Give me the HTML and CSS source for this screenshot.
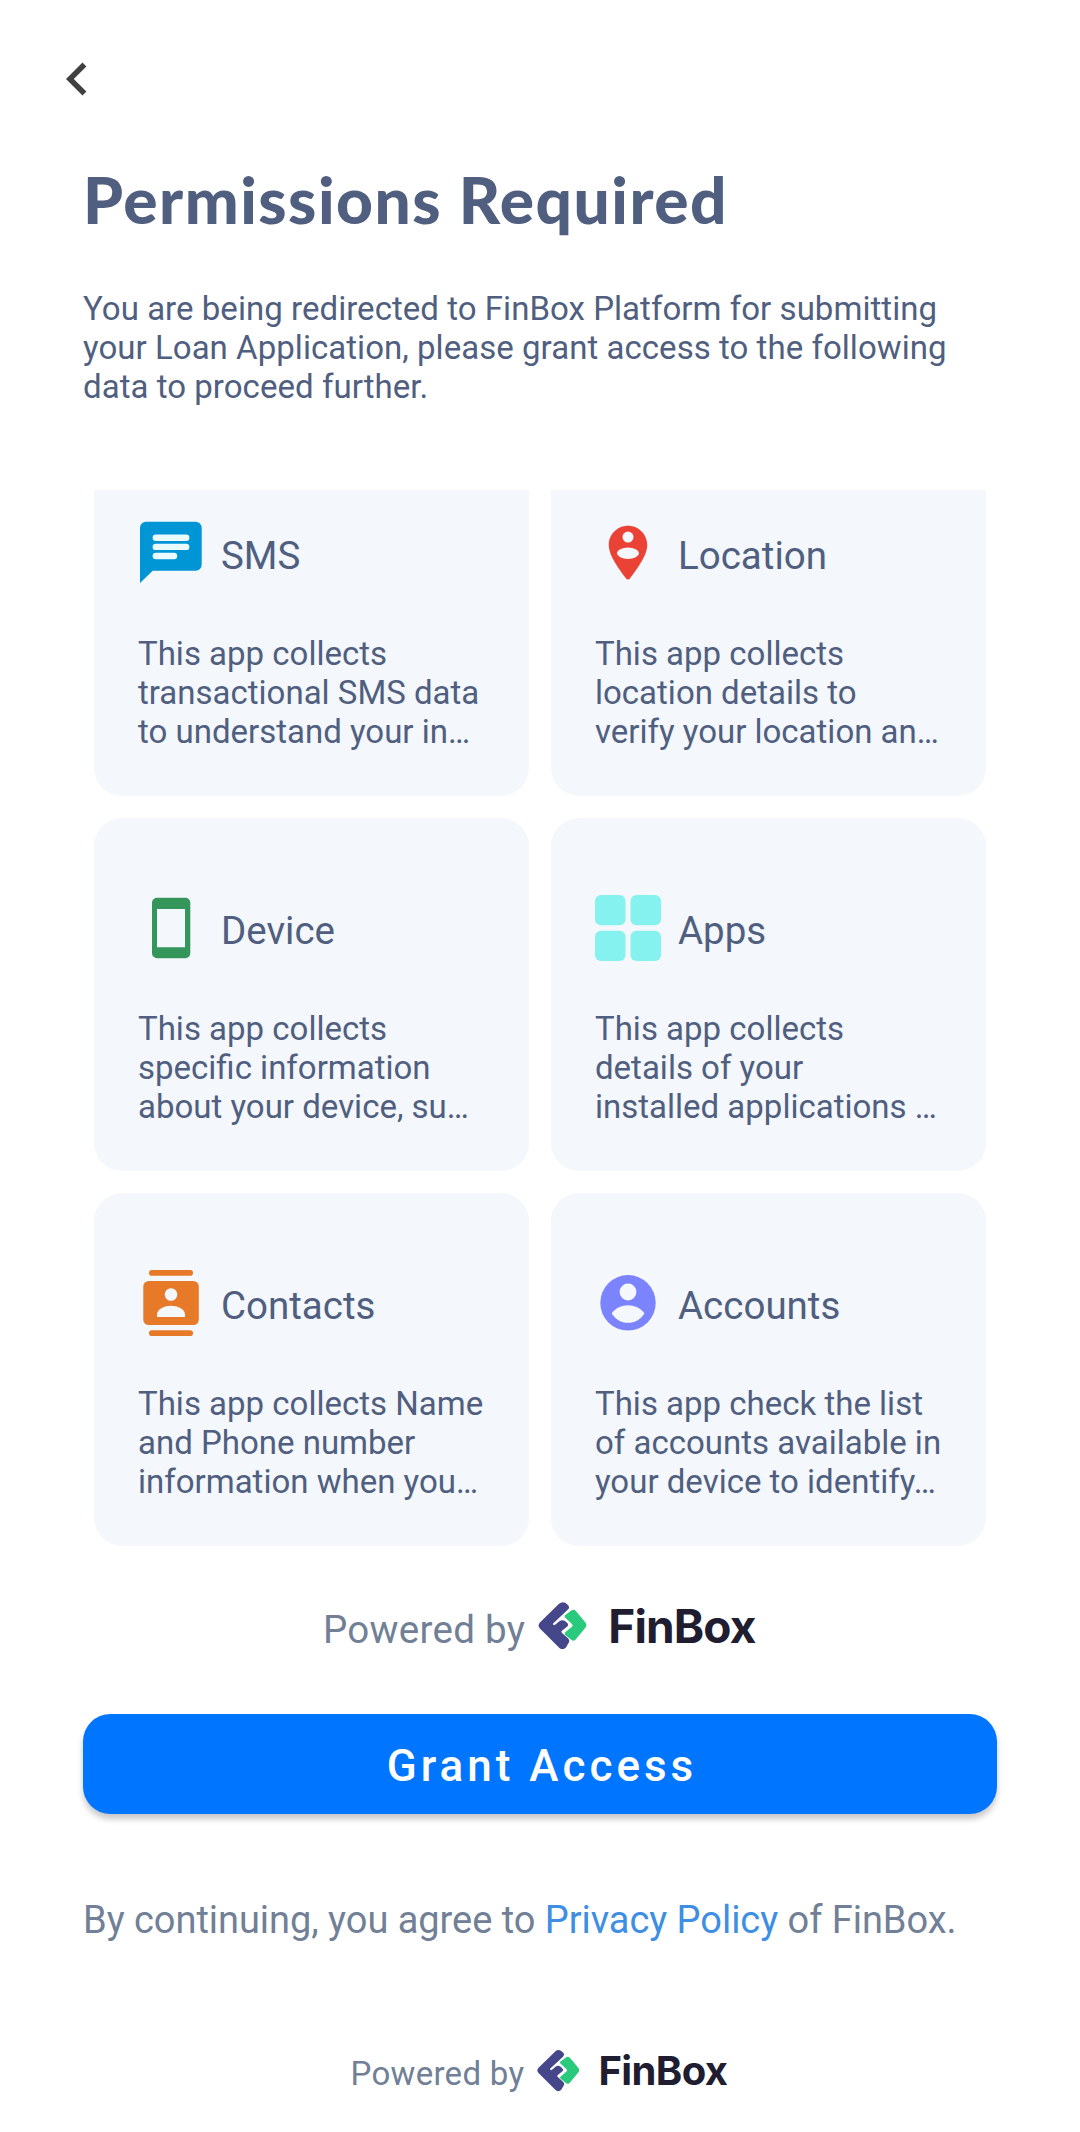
FILE: index.html
```html
<!DOCTYPE html>
<html lang="en">
<head>
<meta charset="utf-8">
<title>Permissions Required</title>
<link rel="stylesheet" href="styles.css">
</head>
<body>
<svg class="defs" aria-hidden="true">
  <symbol id="finbox-mark" viewBox="0 0 147 144">
    <path fill="#46478a" d="M63 5Q73-3 83 3L90 9Q97 16 90 23L45 65Q44 70 50 70L64 58Q73 52 82 58L88 64Q93 69 88 74L71 88Q69 91 72 94L91 111Q97 118 91 126L84 138Q75 147 65 140L5 80Q-3 71 5 62Z"/>
    <path fill="#2aca7c" d="M81 40L100 26Q107 21 114 27L143 62Q149 70 143 78L112 115Q107 120 101 115L82 100Q78 96 82 92L102 75Q106 71 102 67L82 48Q78 44 81 40Z"/>
  </symbol>
</svg>
<main class="screen">
  <header class="topbar">
    <button class="back" aria-label="Back">
      <svg viewBox="0 0 24 24"><path fill="#404040" d="M15.41 7.41 14 6l-6 6 6 6 1.41-1.41L10.83 12z"/></svg>
    </button>
  </header>

  <h1 class="title">Permissions Required</h1>
  <p class="intro">You are being redirected to FinBox Platform for submitting<br>your Loan Application, please grant access to the following<br>data to proceed further.</p>

  <section class="scroller">
    <div class="grid">
      <article class="card">
        <div class="card-head">
          <svg class="icon" viewBox="0 0 66 66"><path fill="#0095d5" d="M8 1.7h49.7a6 6 0 0 1 6 6v37a6 6 0 0 1-6 6H14.7L2 63V7.7a6 6 0 0 1 6-6z"/><path stroke="#e9fbff" stroke-width="6.4" stroke-linecap="round" d="M17.8 17.8h30.4M17.8 26.9h30.4M17.8 36h18.2"/></svg>
          <h2>SMS</h2>
        </div>
        <p>This app collects<br>transactional SMS data<br>to understand your in…</p>
      </article>
      <article class="card">
        <div class="card-head">
          <svg class="icon" viewBox="0 0 24 24"><path fill="#ea4335" d="M12 2.1C8.13 2.1 5 5.23 5 9.1c0 4.1 4.3 9.4 6.24 12.1.4.6 1.13.6 1.53 0C14.7 18.5 19 13.2 19 9.1c0-3.87-3.13-7-7-7z"/><circle cx="12" cy="6.2" r="2" fill="#f4f7fc"/><ellipse cx="12" cy="12.1" rx="4" ry="2.1" fill="#f4f7fc"/></svg>
          <h2>Location</h2>
        </div>
        <p>This app collects<br>location details to<br>verify your location an…</p>
      </article>
      <article class="card">
        <div class="card-head">
          <svg class="icon" viewBox="0 0 66 66"><path fill="#34965b" fill-rule="evenodd" d="M19 2.7h28.3a5 5 0 0 1 5 5v50.6a5 5 0 0 1-5 5H19a5 5 0 0 1-5-5V7.7a5 5 0 0 1 5-5zM19 14v38.3h28V14z"/></svg>
          <h2>Device</h2>
        </div>
        <p>This app collects<br>specific information<br>about your device, su…</p>
      </article>
      <article class="card">
        <div class="card-head">
          <svg class="icon" viewBox="0 0 66 66" fill="#86f2ef"><rect width="30.5" height="30.3" rx="6"/><rect x="35.5" width="30.5" height="30.3" rx="6"/><rect y="35.7" width="30.5" height="30.3" rx="6"/><rect x="35.5" y="35.7" width="30.5" height="30.3" rx="6"/></svg>
          <h2>Apps</h2>
        </div>
        <p>This app collects<br>details of your<br>installed applications …</p>
      </article>
      <article class="card">
        <div class="card-head">
          <svg class="icon" viewBox="0 0 66 66"><g fill="#e67a29"><rect x="11" width="44" height="5.7" rx="2.8"/><rect x="5.3" y="11" width="55.5" height="44" rx="5.5"/><rect x="11" y="60.3" width="44" height="5.7" rx="2.8"/></g><g fill="#f4f7fc"><circle cx="33" cy="24.5" r="6.3"/><path d="M19 47v-2.5c0-5.8 8-8.8 14-8.8s14 3 14 8.8V47z"/></g></svg>
          <h2>Contacts</h2>
        </div>
        <p>This app collects Name<br>and Phone number<br>information when you…</p>
      </article>
      <article class="card">
        <div class="card-head">
          <svg class="icon" viewBox="0 0 66 66"><circle cx="33" cy="32.8" r="27.7" fill="#7b83fe"/><g fill="#f4f7fc"><circle cx="33" cy="22" r="8.4"/><path d="M16.7 43.5C20 38 27 35.2 33 35.2s13 2.8 16.5 8.3C45.5 49.5 40 52.8 33 52.8s-12.5-3.3-16.3-9.3z"/></g></svg>
          <h2>Accounts</h2>
        </div>
        <p>This app check the list<br>of accounts available in<br>your device to identify…</p>
      </article>
    </div>
  </section>

  <div class="powered">
    <span class="by">Powered by</span>
    <svg class="mark"><use href="#finbox-mark"/></svg>
    <span class="brand">FinBox</span>
  </div>

  <button class="grant">Grant Access</button>

  <p class="terms">By continuing, you agree to <a>Privacy Policy</a> of FinBox.</p>

  <footer class="powered small">
    <span class="by">Powered by</span>
    <svg class="mark"><use href="#finbox-mark"/></svg>
    <span class="brand">FinBox</span>
  </footer>
</main>
</body>
</html>
```
FILE: styles.css
```css
* { box-sizing: border-box; margin: 0; padding: 0; }
body { background: #fff; font-family: Roboto, sans-serif; color: #505f7f; }
button { border: 0; background: none; font-family: inherit; }
.defs { display: none; }
.screen { width: 1080px; height: 2132px; overflow: hidden; display: flex; flex-direction: column; }

.topbar { height: 158px; padding: 46px 44px 0; flex: none; }
.back { display: block; width: 66px; height: 66px; }
.back svg { display: block; width: 66px; height: 66px; }

.title { flex: none; height: 84px; padding-left: 83px; font: 900 64px/84px Lato, sans-serif; letter-spacing: 1.5px; white-space: nowrap; }
.intro { flex: none; margin-top: 47px; padding-left: 83px; font-size: 33px; line-height: 39px; letter-spacing: 0.04px; white-space: nowrap; }

.scroller { flex: none; margin: 84px 94px 0; height: 1056px; overflow: hidden; }
.grid { display: grid; grid-template-columns: 435px 435px; grid-auto-rows: 353px; gap: 22px; margin-top: -47px; }
.card { background: #f4f7fc; border-radius: 28px; padding: 77px 44px 44px; white-space: nowrap; }
.card-head { display: flex; align-items: center; height: 66px; gap: 17px; }
.icon { width: 66px; height: 66px; flex: none; }
.card h2 { font-size: 38.5px; line-height: 45px; font-weight: 400; padding-top: 5px; }
.card p { margin-top: 48px; font-size: 33px; line-height: 39px; }

.powered { flex: none; display: flex; align-items: baseline; margin-top: 49px; padding-left: 323px; height: 56px; white-space: nowrap; }
.by { font-size: 38.5px; line-height: 56px; letter-spacing: 0.3px; color: #718096; }
.mark { width: 49px; height: 47.5px; margin-left: 13px; transform: translateY(7px); }
.brand { font: 700 46px/56px Inter, sans-serif; color: #201d31; margin-left: 21px; letter-spacing: -0.9px; }

.grant { flex: none; width: 914px; height: 100px; margin: 63px 0 0 83px; padding: 4px 0 0 4px; border-radius: 27.5px; background: #0075ff; color: #fff; font-size: 44px; font-weight: 500; letter-spacing: 4px; box-shadow: 0 5px 6px rgba(0, 0, 0, 0.22); }
.terms { flex: none; margin-top: 83px; padding-left: 83px; font-size: 38px; line-height: 46px; letter-spacing: -0.04px; color: #718096; white-space: nowrap; }
.terms a { color: #3e8ee3; }

.small { margin-top: 100px; padding-left: 350.5px; height: 48px; }
.small .by { font-size: 33px; line-height: 48px; }
.small .mark { width: 42.5px; height: 41.5px; margin-left: 13px; transform: translateY(7px); }
.small .brand { font-size: 40px; line-height: 48px; margin-left: 18.5px; letter-spacing: -0.6px; }
```
